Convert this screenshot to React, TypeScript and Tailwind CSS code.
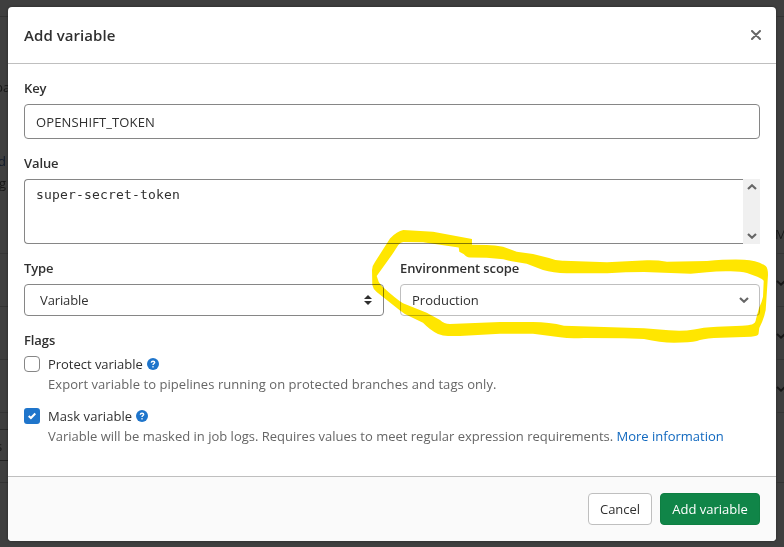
import React from 'react';

const UI = "font-['Open_Sans','Noto_Sans',sans-serif]";

function Chevron({ up = false }: { up?: boolean }) {
  return (
    <svg width="10" height="6" viewBox="0 0 10 6" fill="none" stroke="#666" strokeWidth="2.2" className={up ? 'rotate-180' : ''}>
      <path d="M1 1l4 3.7L9 1" />
    </svg>
  );
}

function Help() {
  return (
    <svg width="12" height="12" viewBox="0 0 12 12">
      <circle cx="6" cy="6" r="6" fill="#1f75cb" />
      <path d="M4.3 4.7C4.4 3.7 5 3.2 6 3.2s1.7.5 1.7 1.3C7.7 5.5 6 5.5 6 6.9" fill="none" stroke="#fff" strokeWidth="1.4" />
      <rect x="5.3" y="8" width="1.4" height="1.4" rx=".5" fill="#fff" />
    </svg>
  );
}

function Label({ children }: { children: React.ReactNode }) {
  return <div className="h-4 whitespace-nowrap text-[13px] font-semibold leading-4 tracking-[-0.1px]">{children}</div>;
}

/** Sliver of the page left visible to the left of the dialog. */
function LeftBackdrop() {
  return (
    <div className="relative w-2 shrink-0 text-[13px] leading-4 text-[#171717]">
      <i className="absolute left-0 top-4 h-px w-2 bg-[#333]" />
      <span className="absolute left-[-5px] top-[79px]">pa</span>
      <span className="absolute left-[-2px] top-[153px] text-[#101a2a]">d</span>
      <span className="absolute left-[-1px] top-[175px]">g</span>
      <i className="absolute left-0 top-[253px] h-px w-2 bg-[#363636]" />
      <i className="absolute left-0 top-[306px] h-px w-2 bg-[#333]" />
      <i className="absolute left-0 top-[359px] h-px w-2 bg-[#353535]" />
      <i className="absolute left-0 top-[412px] h-px w-2 bg-[#353535]" />
      <i className="absolute left-0 top-[429px] h-px w-2 bg-[#2b2b2b]" />
      <span className="absolute left-[-4px] top-[438px]">s</span>
      <i className="absolute left-0 top-[460px] h-px w-2 bg-[#222]" />
      <i className="absolute left-0 top-[482px] h-px w-2 bg-[#333]" />
    </div>
  );
}

/** Sliver of the page left visible to the right of the dialog. */
function RightBackdrop() {
  return (
    <div className="relative w-2 shrink-0 overflow-hidden text-[13px] leading-4 text-[#171717]">
      <i className="absolute left-0 top-4 h-px w-2 bg-[#333]" />
      <span className="absolute left-[-1px] top-[226px]">M</span>
      <i className="absolute left-0 top-[253px] h-px w-2 bg-[#353535]" />
      <i className="absolute left-0 top-[306px] h-px w-2 bg-[#353535]" />
      <i className="absolute left-0 top-[359px] h-px w-2 bg-[#353535]" />
      <i className="absolute left-0 top-[412px] h-px w-2 bg-[#353535]" />
      <i className="absolute left-0 top-[482px] h-px w-2 bg-[#333]" />
      <svg className="absolute left-0 top-[270px]" width="8" height="130" fill="none" stroke="#171717" strokeWidth="2">
        <path d="M1 11l4 3.7L9 11M1 64l4 3.7L9 64M1 117l4 3.7L9 117" />
      </svg>
    </div>
  );
}

function Highlight() {
  return (
    <svg className="pointer-events-none absolute left-0 top-0 mix-blend-multiply" width="784" height="547" fill="#ffe600">
      <path d="M403.3 230Q397 231 390 238.5L375 262Q372 266 372 270L372.3 285Q373 289 376.7 292L400 310.5Q404 314 411 317L423 322.7Q430 330 438 334Q443 336 448 336H460L500 333.7H533L560 337.3Q570 339 584 338L624 338.3L644 339Q660 342.7 674 342.7Q690 342.5 697 341Q702 339 714 338L751 336.7Q758 336 758.5 334L759.3 328Q764 319 765.7 310L768 275Q768 268 765.7 266Q757 260 744 259.7Q729 259 707 261L667 261.7Q657 260 647 260.3L607 262.3L564 260.7Q556 261 549 258L533 254L516.7 251.7L503 246.7Q495 245 486.7 245L472 244.7V239L433 231.7L403.3 230ZM403.3 242L423 242.3L458.7 247.5L459.3 251.7L464 254.3Q466 257.3 470 257.5L486.7 257.7L503.3 259.3L511.7 261.3L526.7 263.7L543 270Q553 273 566.7 273.3H607.3Q626 272 644 272L690.7 273.7L707 272.3Q718 271 730.7 271.3Q741 271.3 747 273L757.3 276.7Q763 279 763.7 281L763 296.7Q762 302 759 308L756 319Q755.8 323 752 324.5Q749 325.3 742 325.7L717 326.7Q702 327.5 694 329.5Q683 331.5 669 330.3L644 328.3L564 325.7Q549 322 533 322H500L450 324Q444 324 440 320L426.7 312.7L403 303.3Q396 299 381.7 286Q378 282 376.7 276L393 253.3L398.3 245Q401 242 403.3 242Z" fillRule="evenodd" />
    </svg>
  );
}

export default function App() {
  return (
    <div className={`relative flex h-[547px] w-[784px] overflow-hidden bg-[#3f3f3f] text-[#303030] ${UI}`}>
      <LeftBackdrop />
      <div className="relative mt-[7px] flex h-[534px] w-[768px] flex-col overflow-hidden rounded-[4px] bg-white shadow-[0_0_3px_#0006]">
        <header className="flex h-[57px] shrink-0 items-center justify-between border-b border-[#bfbfbf] pl-4 pr-[15px]">
          <h1 className="text-[15px] font-semibold leading-6 tracking-[0.06px]">Add variable</h1>
          <svg width="10" height="10" viewBox="0 0 10 10" stroke="#666" strokeWidth="2" strokeLinecap="round">
            <path d="M1 1l8 8M9 1L1 9" />
          </svg>
        </header>

        <main className="flex h-[412px] shrink-0 flex-col px-4 pt-4">
          <Label>Key</Label>
          <div className="mt-2 flex h-[35px] items-center rounded-[4px] border border-[#868686] px-[11px] pt-0.5 text-[13px]">
            <span className="tracking-[0.12px]">OPENSHIFT_TOKEN</span>
          </div>
          <div className="mt-4"><Label>Value</Label></div>
          <div className="mt-2 flex h-[65px] justify-between rounded-l-[4px] border border-r-0 border-[#868686] pl-[11px]">
            <span className="mt-[7px] font-['DejaVu_Sans_Mono',monospace] text-[13px] leading-4 tracking-[0.17px]">super-secret-token</span>
            <div className="-my-px flex w-[17px] flex-col items-center justify-between bg-[#f0f0f0] py-[5px]">
              <Chevron up />
              <Chevron />
            </div>
          </div>

          <div className="mt-4 flex gap-4">
            <div className="w-[360px]">
              <Label>Type</Label>
              <div className="mt-2 flex h-8 items-center justify-between rounded-[4px] border border-[#868686] pl-[15px] pr-[11px] text-[13px]">
                <span className="pt-0.5 tracking-[-0.12px]">Variable</span>
                <svg width="8" height="10" viewBox="0 0 8 10" fill="#303030"><path d="M0 4l4-4 4 4zM0 6l4 4 4-4z" /></svg>
              </div>
            </div>
            <div className="w-[360px]">
              <Label>Environment scope</Label>
              <div className="mt-2 flex h-8 items-center justify-between rounded-[4px] border border-[#bfbfbf] pl-[11px] pr-[10px] text-[13px]">
                <span className="pt-0.5">Production</span>
                <Chevron />
              </div>
            </div>
          </div>

          <div className="mt-4"><Label>Flags</Label></div>
          <div className="mt-2 flex h-4 items-center">
            <span className="mr-2 h-4 w-4 rounded-[4px] border border-[#868686]" />
            <span className="mr-[5px] w-[94px] whitespace-nowrap text-[13px] leading-4 tracking-[-0.03px]">Protect variable</span>
            <Help />
          </div>
          <p className="ml-6 mt-1 h-4 whitespace-nowrap text-[13px] leading-4 tracking-[0.055px] text-[#666]">Export variable to pipelines running on protected branches and tags only.</p>
          <div className="mt-4 flex h-4 items-center">
            <span className="mr-2 flex h-4 w-4 items-center justify-center rounded-[3px] bg-[#1f75cb]">
              <svg width="8" height="8" viewBox="0 0 8 8" fill="none" stroke="#fff" strokeWidth="2"><path d="M.7 4l2.2 2L7.3 1.5" /></svg>
            </span>
            <span className="mr-1 w-[84px] whitespace-nowrap text-[13px] leading-4 tracking-[0.06px]">Mask variable</span>
            <Help />
          </div>
          <p className="ml-6 mt-1 h-4 whitespace-nowrap text-[13px] leading-4 text-[#666]">
            Variable will be masked in job logs. Requires values to meet regular expression requirements. <a className="text-[#1068bf]">More information</a>
          </p>
        </main>

        <footer className="flex flex-1 justify-end gap-2 border-t border-[#bfbfbf] bg-[#fafafa] px-4 pt-4 text-[13px]">
          <button className="h-8 w-16 rounded-[4px] border border-[#bfbfbf] bg-white pt-0.5 tracking-[-0.05px]">Cancel</button>
          <button className="h-8 w-[100px] rounded-[4px] border border-[#0e7f42] bg-[#108548] pt-0.5 text-white">Add variable</button>
        </footer>
      </div>
      <RightBackdrop />
      <Highlight />
    </div>
  );
}
